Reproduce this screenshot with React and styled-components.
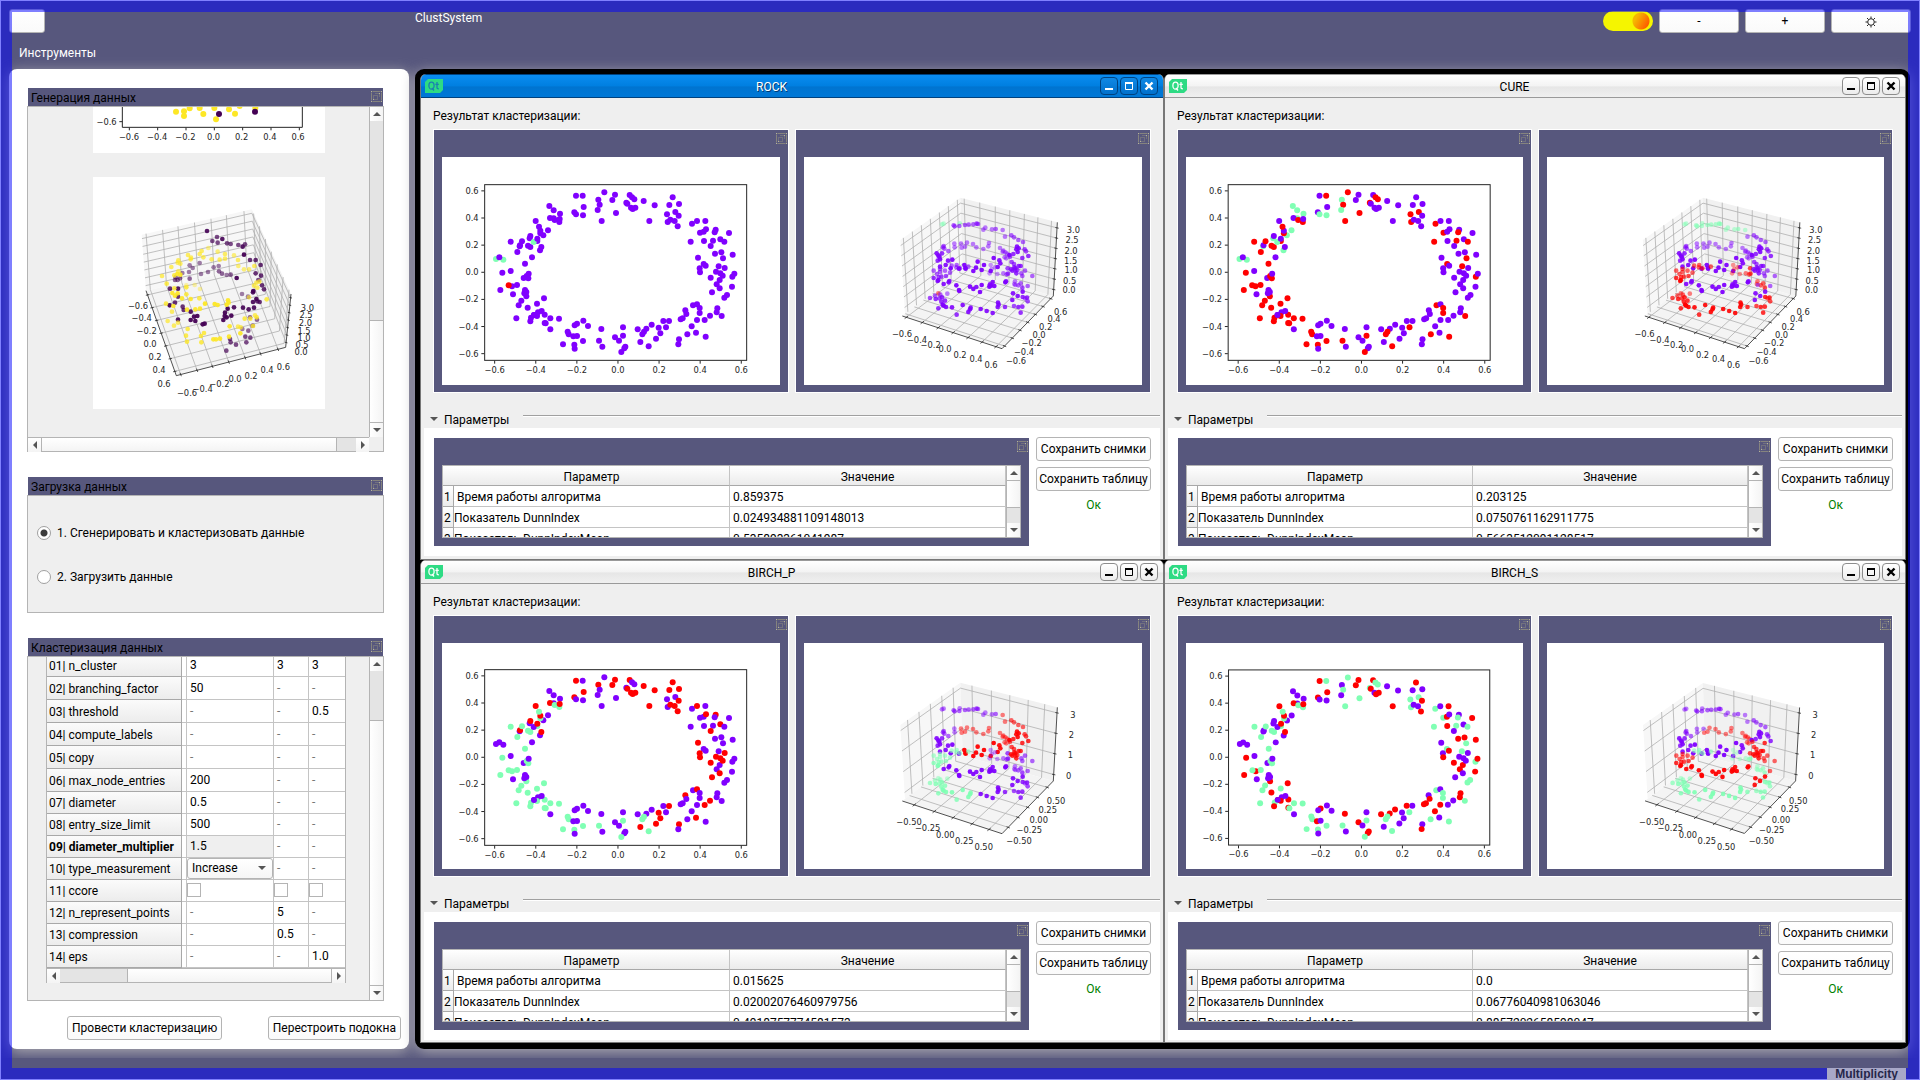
import React from "react";
import styled, { createGlobalStyle, css } from "styled-components";

const GlobalStyle = createGlobalStyle`
  *, *::before, *::after { box-sizing: border-box; }
  html, body { margin: 0; height: 100%; }
  body {
    background: #57577d;
    font-family: Roboto, "Noto Sans", sans-serif;
    font-size: 12px;
    line-height: 16px;
    color: #000;
    overflow: hidden;
  }
  button, input, select { font: inherit; color: inherit; margin: 0; }
`;

/* ---------- data ---------- */

const COLORS = { P: "#8000ff", G: "#80ffb4", R: "#ff0000" };
const ALGORITHMS = ["ROCK", "CURE", "BIRCH_P", "BIRCH_S"];

/* x,y,clusters: one letter for each algorithm, in the order of ALGORITHMS */
const parse = (text) =>
  text
    .trim()
    .split(/\s+/)
    .map((item) => {
      const parts = item.split(",");
      return {
        x: Number(parts[0]),
        y: Number(parts[1]),
        clusters: parts[parts.length - 1],
        alpha: parts.length > 3 ? Number(parts[2]) / 10 : 1,
      };
    });

const FLAT_POINTS = parse(`
498,407,PPRR 518,407,PRPG 583,397,PRPG 615,404,PPRR 607,420,PPRR 565,419,PGRP 569,434,PRPG 563,450,PGPP
521,441,PPRR 418,438,PGPP 431,451,PGPP 450,461,PGPP 493,457,PPRR 498,463,PGPP 519,466,PGPP 575,483,PRPG
618,459,PRPG 659,405,PPRR 666,412,PRPG 673,418,PRPG 649,428,PRPG 652,431,PPRR 663,443,PPRP 668,447,PPRR
676,443,PPRR 701,423,PPRP 734,436,PPRP 718,483,PPRR 788,412,PPRR 778,435,PPRP 807,432,PPRP 771,463,PRPG
796,456,PRPG 806,467,PPRR 773,486,PRPG 781,479,PPRP 794,483,PPRP 803,499,PPRR 846,491,PRPG 861,483,PPRP
886,483,PPPR 870,518,PRPG 881,515,PPPR 888,508,PPRP 917,509,PPRP 914,517,PRPG 957,519,PPPR 842,545,PRPG
882,543,PPPR 909,542,PRPG 902,558,PPRP 931,538,PPRP 943,545,PRPG 915,581,PPPR 934,577,PPPR 968,584,PPPR
864,593,PPRP 939,595,PRPG 881,612,PRPG 887,617,PPPR 869,625,PPRP 870,637,PPRR 926,619,PRPG 944,624,PPRP
918,635,PPRP 931,640,PPRP 902,653,PPRR 929,660,PPPR 967,650,PRPG 973,641,PPPR 938,647,PPRP 920,673,PPPR
929,685,PPRP 966,680,PPPR 906,697,PPRP 951,705,PPPG 943,713,PPPG 849,736,PRPG 861,733,PPRP 869,744,PRPG
869,759,PRPG 826,751,PPRP 829,762,PPPR 818,775,PPPR 812,778,PPPR 922,745,PPPR 920,757,PPPR 935,768,PRPG
900,767,PPRP 884,780,PPRP 861,780,PPPR 845,799,PPPR 858,818,PPRP 887,830,PRPG 832,823,PRPG 807,838,PPRP
805,853,PPPR 777,783,PPRP 760,783,PPPR 768,802,PRPG 746,803,PPRP 725,794,PPPR 751,820,PPRP 738,836,PPRP
716,859,PRGG 709,806,PPPR 683,808,PPPR 702,815,PRGG 697,823,PRGG 691,846,PPRP 639,802,PPPP 639,827,PRGG
615,832,PPPR 627,842,PPPP 646,860,PPPR 643,865,PPPR 634,876,PRGG 574,807,PPPR 567,842,PRGG 577,860,PPPP
534,798,PPPP 520,782,PPPP 501,791,PPPR 494,796,PPPP 473,815,PRGG 476,823,PRGG 490,829,PPPR 501,828,PPPP
519,843,PRGG 459,853,PRGG 493,854,PRGG 494,866,PPPP 421,808,PPPP 447,776,PRGG 421,775,PRGG 404,764,PRGR
404,789,PRGR 407,790,PRGG 395,753,PPPP 384,757,PPPP 372,765,PPPR 381,768,PRGR 363,773,PRGG 361,784,PRGR
372,765,PPPP 381,731,PRGG 402,715,PRGR 353,743,PRGR 319,775,PRGG 326,736,PRGG 334,722,PRGG 349,709,PRGR
343,700,PPPP 349,696,PPPP 345,690,PPPP 309,703,PPPP 271,690,PRGR 306,679,PRGR 296,676,RRGG 321,675,PRGG
341,654,PPPP 350,648,PRGG 355,655,PRGG 356,641,PPPP 277,638,PRGR 302,633,PPPP 345,611,PRGG 366,592,PPPP
258,597,GGPP 280,599,GGPP 268,592,PPPP 390,571,PGPP 394,561,PPRR 322,576,PRGG 329,559,PGPP 330,556,PPRP
302,545,PRGG 336,544,PRGG 354,557,PRGG 361,561,PRGG 359,535,PGPP 361,528,PPRP 382,543,PRGG 371,546,GGPP
382,536,PPRR 400,526,PGPP 391,520,PRGG 391,512,PPRR 387,500,PRGG 414,511,PGPP 377,483,PPRR 431,475,PGPP
420,474,PPRR 434,480,PRGG 448,486,PRGG 449,477,PPRR`);

/* x,y,depth shading,clusters */
const DEPTH_POINTS = parse(`
486,493,5,GGPP 491,491,5,GGPP 539,490,5,GGPP 521,496,6,PGPP 524,499,6,PGPP 538,498,6,PGPP 555,495,6,PGPP
566,494,6,PGPP 580,493,6,PGPP 590,491,7,PGPP 594,492,6,PGPP 610,509,5,PGPP 616,503,5,PGPP 636,508,5,PGPP
647,507,6,PGPP 668,510,5,PGRP 675,530,5,PPRP 694,526,6,PPRP 702,532,6,PPRP 715,540,6,PPRP 729,546,6,PPRP
523,551,5,PPPP 524,562,5,PPPP 505,573,6,PPPP 491,558,6,PPPP 489,562,6,PPPP 493,566,6,PPPP 543,551,5,PPRP
545,563,5,PPRR 555,560,5,PPRR 561,548,5,PPRR 579,552,5,PPRR 589,562,5,PPRR 610,567,5,PPRR 625,559,5,PPRR
627,549,5,PPRR 660,564,5,PPRR 670,572,5,PPRR 676,577,5,PPRR 681,581,5,PPRR 668,575,5,PPRR 679,595,5,PPRR
674,592,5,PPRR 711,560,9,PPRP 709,568,9,PPRP 716,565,9,PPRP 713,576,9,PPRP 734,568,7,PPRP 738,574,7,PPRP
745,588,8,PPRP 727,594,8,PPRR 688,585,10,PPRP 700,582,8,PPRP 470,580,9,PPPP 486,580,8,PPPP 478,590,9,PPPP
473,602,8,PPPP 480,598,9,PPPP 475,587,9,PPPP 504,602,9,PPPP 517,599,10,PPPP 480,620,9,PPPP 497,615,9,PPPP
641,594,10,PPRP 658,601,9,PPRP 661,610,9,PPRP 653,621,10,PPRP 593,605,10,PPRP 612,615,10,PPRP 588,623,10,PPRP
580,633,10,PPRP 605,630,10,PPRP 553,615,10,PPRP 556,624,10,PPRP 557,626,10,PPRP 632,633,10,PPRP 537,626,10,PPPP
512,625,10,PPPP 530,615,6,PRGG 529,622,6,PRGG 515,617,6,PRGG 540,625,6,PRGG 565,620,6,PRGG 632,615,4,PRPG
629,640,4,PRPG 645,622,4,PRPG 652,642,4,PRPG 635,627,4,PRPG 670,640,5,PRPG 683,625,7,PRPR 684,641,7,PRPG
680,643,6,PRPG 695,606,7,PPRR 702,612,7,PPRR 693,628,8,PPRR 697,632,8,PPRR 703,622,8,PPRR 706,625,8,PPRR
709,640,8,PPRR 706,632,7,PPRR 716,618,8,PPRR 722,618,8,PPRR 712,630,7,PPRR 735,632,6,PPPR 757,648,6,PPPR
727,648,6,PPPR 724,640,6,PPPR 690,590,7,PPRR 461,632,6,PRGR 480,636,6,PRGR 471,642,6,PRGR 476,651,7,PRGR
461,654,8,PRGR 480,627,6,PRGR 495,632,6,PRGR 510,638,6,PRGR 498,648,7,PRGR 484,650,7,PRGR 473,663,9,PRGR
475,660,9,PRGR 508,663,9,PPPR 506,667,9,PPPR 491,672,9,PPPR 529,676,10,PPPR 537,690,10,PPPR 538,693,10,PPPR
570,680,10,PPPR 580,687,10,PPPR 589,681,9,PPPR 605,675,10,PPPR 600,696,10,PPPR 628,680,10,PPPR 638,666,9,PPPR
633,677,10,PPPR 643,678,10,PPPR 630,673,9,PPPR 676,667,10,PPPR 678,664,9,PPPR 705,664,5,PRPG 703,672,5,PRPG
715,676,6,PRPG 722,670,6,PRPG 727,683,7,PRPG 743,678,6,PPPR 706,675,5,PPPG 699,700,9,PPPR 713,708,9,PPPR
728,695,9,PPPR 728,711,8,PRPG 697,720,9,PPPR 741,713,8,PRPG 743,724,7,PRPG 735,715,6,PRPG 702,738,7,PRPG
715,741,8,PRPG 727,740,8,PRPG 722,758,8,PRPG 475,700,5,RRGG 481,704,6,PRGG 502,701,5,PRGG 465,707,6,PRGG
450,714,7,PRGG 467,717,8,PRGG 486,712,8,PRGG 495,722,8,PRGG 484,725,8,PRGG 478,715,7,PRGG 488,734,10,PRGG
491,737,10,PRGG 498,741,9,PRGG 475,745,8,PRGG 516,742,9,PRGG 548,735,9,PRGG 572,743,9,PRGG 570,748,9,PRGG
565,756,9,PRGG 530,764,8,PRGG 602,747,9,PRPG 620,753,9,PRPG 638,759,9,PRPG 654,728,9,PRPG 656,734,9,PRPG
653,741,9,PRPG 675,741,8,PRPG`);

const SOURCE_POINTS = parse(`
351,393,9,D 367,423,7,D 381,411,7,D 383,428,7,D 397,417,9,D 411,430,7,D 422,432,7,D 445,435,7,D 458,440,9,D
465,433,7,D 462,464,10,D 480,480,8,D 497,480,8,D 512,495,8,D 497,520,8,D 513,527,8,D 505,540,7,D 516,556,8,D
522,568,8,D 490,573,10,D 489,577,9,D 499,597,10,D 489,606,9,D 502,604,8,D 509,606,8,D 476,628,9,D 492,623,9,D
459,623,9,D 432,622,9,D 456,582,5,D 474,590,5,D 440,534,10,D 422,524,6,D 410,525,5,D 396,521,6,D 386,498,5,D
387,514,6,D 371,502,5,D 354,516,5,D 333,522,5,D 329,489,5,D 308,504,5,D 299,496,5,D 297,516,5,D 299,536,6,D
277,519,5,D 270,535,6,D 255,540,6,D 263,540,6,D 257,532,6,D 240,566,8,D 264,566,9,D 264,590,8,D 255,608,8,D
239,616,10,D 278,620,8,D 281,630,8,D 302,635,9,D 264,659,9,D 302,660,10,D 312,650,10,D 322,648,10,D 316,663,10,D
338,673,10,D 344,671,10,D 400,660,10,D 404,648,10,D 405,638,10,D 413,626,10,D 424,647,10,D 410,652,10,D
480,652,6,D 501,659,6,D 457,687,5,D 475,692,6,D 488,677,6,D 466,710,7,D 481,713,7,D 469,727,7,D 422,727,7,D
438,734,7,D 420,717,7,D 409,752,7,D
216,528,7,Y 244,501,7,Y 265,481,7,Y 271,491,7,Y 263,488,7,Y 294,465,7,Y 303,473,7,Y 302,478,7,Y 329,462,7,Y
335,453,7,Y 355,444,5,Y 340,472,7,Y 365,478,7,Y 383,455,6,Y 389,479,7,Y 405,462,7,Y 405,476,7,Y 432,466,6,Y
444,480,7,Y 445,498,6,Y 462,508,6,Y 477,508,6,Y 493,498,7,Y 499,548,7,Y 508,545,7,Y 492,557,7,Y 502,563,7,Y
477,592,6,Y 530,598,8,Y 253,526,8,Y 265,514,7,Y 262,522,9,Y 271,524,9,Y 230,551,8,Y 289,562,8,Y 314,555,4,Y
330,567,4,Y 289,556,4,Y 253,565,8,Y 247,579,9,Y 263,580,9,Y 255,587,9,Y 276,595,9,Y 289,583,8,Y 302,597,9,Y
328,595,8,Y 228,611,8,Y 250,618,9,Y 246,635,7,Y 291,629,9,Y 316,628,9,Y 330,626,9,Y 345,611,10,Y 374,612,10,Y
383,615,9,Y 410,614,10,Y 414,601,9,Y 416,608,9,Y 233,663,7,Y 252,677,7,Y 264,668,7,Y 293,687,8,Y 291,725,8,Y
288,707,8,Y 333,708,8,Y 342,699,8,Y 334,727,8,Y 370,718,9,Y 378,718,9,Y 390,716,9,Y 417,710,9,Y 419,679,9,Y
451,700,9,Y 452,682,7,Y 444,680,7,Y 464,656,8,Y 481,656,8,Y 495,646,7,Y 500,652,8,Y 489,678,8,Y`);

const SOURCE_COLORS = { D: "#440154", Y: "#fde725" };

const TICKS = ["−0.6", "−0.4", "−0.2", "0.0", "0.2", "0.4", "0.6"];

const label = (text, x, y) => ({ text, x, y });

const FINE_SCENE = {
  left: [[361, 540], [541, 413], [548, 632], [375, 762]],
  right: [[541, 413], [832, 487], [820, 708], [548, 632]],
  floor: [[367, 768], [548, 632], [820, 708], [666, 866]],
  a: [0.05, 0.2, 0.35, 0.5, 0.65, 0.8, 0.95],
  b: [0.04, 0.2, 0.36, 0.51, 0.66, 0.8, 0.94],
  z: [0.075, 0.213, 0.352, 0.492, 0.63, 0.77, 0.912],
  labels: [
    label("−0.6", 366, 823), label("−0.4", 411, 839), label("−0.2", 452, 854), label("0.0", 495, 868),
    label("0.2", 540, 884), label("0.4", 588, 898), label("0.6", 633, 914),
    label("−0.6", 708, 902), label("−0.4", 732, 875), label("−0.2", 755, 850), label("0.0", 777, 826),
    label("0.2", 797, 802), label("0.4", 822, 778), label("0.6", 842, 755),
    label("3.0", 880, 509), label("2.5", 876, 541), label("2.0", 873, 572), label("1.5", 872, 602),
    label("1.0", 873, 631), label("0.5", 869, 662), label("0.0", 867, 691),
  ],
};

const COARSE_SCENE = {
  ...FINE_SCENE,
  a: [0.12, 0.31, 0.5, 0.69, 0.88],
  b: [0.12, 0.32, 0.51, 0.7, 0.87],
  z: [0.075, 0.352, 0.63, 0.912],
  labels: [
    label("−0.50", 387, 831), label("−0.25", 443, 849), label("0.00", 496, 870), label("0.25", 553, 888),
    label("0.50", 611, 907), label("−0.50", 717, 889), label("−0.25", 748, 855), label("0.00", 776, 825),
    label("0.25", 803, 794), label("0.50", 828, 767),
    label("3", 879, 511), label("2", 874, 570), label("1", 871, 629), label("0", 866, 693),
  ],
};

const SOURCE_SCENE = {
  left: [[155, 404], [485, 328], [493, 497], [168, 572]],
  right: [[485, 328], [603, 582], [587, 742], [493, 497]],
  floor: [[259, 827], [168, 572], [493, 497], [587, 742]],
  a: [0.04, 0.19, 0.33, 0.48, 0.63, 0.77, 0.93],
  b: [0.05, 0.2, 0.35, 0.5, 0.65, 0.8, 0.95],
  z: [0.07, 0.21, 0.35, 0.49, 0.63, 0.77, 0.91],
  labels: [
    label("−0.6", 144, 617), label("−0.4", 155, 655), label("−0.2", 170, 692), label("0.0", 180, 731),
    label("0.2", 195, 770), label("0.4", 207, 811), label("0.6", 222, 853),
    label("−0.6", 291, 878), label("−0.4", 338, 866), label("−0.2", 388, 852), label("0.0", 435, 838),
    label("0.2", 483, 827), label("0.4", 531, 811), label("0.6", 580, 800),
    label("3.0", 652, 625), label("2.5", 648, 646), label("2.0", 646, 670), label("1.5", 642, 693),
    label("1.0", 642, 714), label("0.5", 636, 736), label("0.0", 633, 757),
  ],
};

const WINDOWS = [
  { name: "ROCK", active: true, upper: true, scene: FINE_SCENE, values: ["0.859375", "0.024934881109148013", "0.535893361041987"] },
  { name: "CURE", upper: true, scene: FINE_SCENE, values: ["0.203125", "0.0750761162911775", "0.5663512091128517"] },
  { name: "BIRCH_P", scene: COARSE_SCENE, values: ["0.015625", "0.02002076460979756", "0.4918757774581573"] },
  { name: "BIRCH_S", scene: COARSE_SCENE, values: ["0.0", "0.06776040981063046", "0.8857202658598047"] },
];

const METRICS = ["\u00a0Время работы алгоритма", "Показатель DunnIndex", "Показатель DunnIndexMean"];

const PARAMETERS = [
  ["01| n_cluster", "3", "3", "3"],
  ["02| branching_factor", "50", "-", "-"],
  ["03| threshold", "-", "-", "0.5"],
  ["04| compute_labels", "-", "-", "-"],
  ["05| copy", "-", "-", "-"],
  ["06| max_node_entries", "200", "-", "-"],
  ["07| diameter", "0.5", "-", "-"],
  ["08| entry_size_limit", "500", "-", "-"],
  ["09| diameter_multiplier", "1.5", "-", "-"],
  ["10| type_measurement", "select", "-", "-"],
  ["11| ccore", "check", "check", "check"],
  ["12| n_represent_points", "-", "5", "-"],
  ["13| compression", "-", "0.5", "-"],
  ["14| eps", "-", "-", "1.0"],
];

/* ---------- charts ---------- */

const Drawing = styled.svg`
  display: block;
  width: 100%;
  height: 100%;
  background: #fff;
  text {
    font-family: "DejaVu Sans", sans-serif;
    font-size: 25px;
    fill: #262626;
  }
`;

function FlatChart({ name }) {
  const index = ALGORITHMS.indexOf(name);
  return (
    <Drawing viewBox="96 291 1014 684" preserveAspectRatio="xMidYMid slice" role="img" aria-label={`${name} 2D`}>
      {FLAT_POINTS.map((p, i) => (
        <circle key={i} cx={p.x} cy={p.y} r="9" fill={COLORS[p.clusters[index]]} />
      ))}
      <rect x="224" y="374" width="786" height="527" fill="none" stroke="#262626" strokeWidth="3" />
      {TICKS.map((t, i) => (
        <g key={t}>
          <path d={`M${254 + i * 123.3} 902v9M${223} ${881 - i * 81.4}h-9`} stroke="#262626" strokeWidth="3" />
          <text x={254 + i * 123.3} y="938" textAnchor="middle">{t}</text>
          <text x="206" y={890 - i * 81.4} textAnchor="end">{t}</text>
        </g>
      ))}
    </Drawing>
  );
}

const mix = (p, q, t) => [p[0] + (q[0] - p[0]) * t, p[1] + (q[1] - p[1]) * t];
const seg = (p, q) => `M${p[0].toFixed(1)} ${p[1].toFixed(1)}L${q[0].toFixed(1)} ${q[1].toFixed(1)}`;
const quad = (q) => q.map((p) => p.join(",")).join(" ");
const hatch = ([a, b, c, d], along, across) =>
  along.map((t) => seg(mix(a, b, t), mix(d, c, t))).join("") +
  across.map((t) => seg(mix(a, d, t), mix(b, c, t))).join("");

function SceneBox({ scene, children, edges, ticks }) {
  return (
    <g>
      <polygon points={quad(scene.left)} fill="#f7f7f7" />
      <polygon points={quad(scene.right)} fill="#f1f1f1" />
      <polygon points={quad(scene.floor)} fill="#f4f4f4" />
      <path
        d={
          hatch(scene.left, scene.a, scene.z) +
          hatch(scene.right, scene.b, scene.z) +
          ticks.floor
        }
        stroke="#b0b0b0"
        strokeWidth="2.4"
        fill="none"
      />
      <path d={edges + ticks.marks} stroke="#262626" strokeWidth="2.4" fill="none" />
      {children}
      {scene.labels.map((l, i) => (
        <text key={i} x={l.x} y={l.y + 9} textAnchor="middle">{l.text}</text>
      ))}
    </g>
  );
}

const nudge = (p, dx, dy) => [seg([p[0] - dx, p[1] - dy], [p[0] + dx, p[1] + dy])];

function DepthChart({ name, scene }) {
  const index = ALGORITHMS.indexOf(name);
  const [west, back, east, front] = scene.floor;
  const top = scene.right[1];
  const marks =
    scene.b.map((t) => nudge(mix(west, front, t), 5, -4)).join("") +
    scene.a.map((t) => nudge(mix(front, east, t), 5, 2)).join("") +
    scene.z.map((t) => nudge(mix(top, east, t), 5, 1)).join("");
  return (
    <Drawing viewBox="72 291 1014 684" preserveAspectRatio="xMidYMid slice" role="img" aria-label={`${name} 3D`}>
      <SceneBox
        scene={scene}
        edges={seg(west, front) + seg(front, east) + seg(east, top)}
        ticks={{ floor: hatch([west, back, east, front], scene.a, scene.b), marks }}
      >
        {DEPTH_POINTS.map((p, i) => (
          <circle key={i} cx={p.x} cy={p.y} r="7" fill={COLORS[p.clusters[index]]} fillOpacity={Math.min(p.alpha, 0.95)} />
        ))}
      </SceneBox>
    </Drawing>
  );
}

function SourceDepthChart() {
  const scene = SOURCE_SCENE;
  const [front, west, back, east] = scene.floor;
  const top = scene.right[1];
  const marks =
    scene.b.map((t) => nudge(mix(west, front, t), 5, -1)).join("") +
    scene.a.map((t) => nudge(mix(front, east, t), 2, 5)).join("") +
    scene.z.map((t) => nudge(mix(top, east, t), 4, 1)).join("");
  return (
    <Drawing viewBox="9 231 696 696" role="img" aria-label="3D">
      <SceneBox
        scene={scene}
        edges={seg(west, front) + seg(front, east) + seg(east, top)}
        ticks={{ floor: hatch([west, back, east, front], scene.a, scene.b), marks }}
      >
        {SOURCE_POINTS.map((p, i) => (
          <circle key={i} cx={p.x} cy={p.y} r="7" fill={SOURCE_COLORS[p.clusters]} fillOpacity={Math.min(p.alpha, 0.95)} />
        ))}
      </SceneBox>
    </Drawing>
  );
}

const TAIL_POINTS = [
  [258, 35, "Y"], [282, 34, "Y"], [282, 48, "Y"], [299, 25, "Y"], [329, 24, "Y"], [340, 42, "Y"], [373, 24, "Y"],
  [378, 58, "Y"], [387, 42, "D"], [417, 28, "Y"], [435, 41, "Y"], [449, 18, "Y"], [496, 24, "Y"], [495, 35, "D"],
];

function SourceFlatChart() {
  return (
    <Drawing viewBox="9 21 696 138" role="img" aria-label="2D">
      {TAIL_POINTS.map(([x, y, c], i) => (
        <circle key={i} cx={x} cy={y} r="9" fill={SOURCE_COLORS[c]} />
      ))}
      <path d="M97 0V82H637V0M97 65h-9" fill="none" stroke="#262626" strokeWidth="3" />
      <text x="80" y="74" textAnchor="end">−0.6</text>
      {TICKS.map((t, i) => (
        <g key={t}>
          <path d={`M${118 + i * 85} 83v8`} stroke="#262626" strokeWidth="3" />
          <text x={117 + i * 84.5} y="119" textAnchor="middle">{t}</text>
        </g>
      ))}
    </Drawing>
  );
}

/* ---------- small parts ---------- */

const Icon = styled.svg`
  display: block;
  flex: none;
`;

const PlainIconButton = styled.button`
  display: block;
  padding: 0;
  border: 0;
  background: none;
`;

function FloatButton() {
  return (
    <PlainIconButton type="button" aria-label="Открепить панель">
      <Icon width="11" height="11" viewBox="0 0 11 11" fill="none">
        <path d="M1.5.5h8M.5 1.5v8M1.5 10.5h8M10.500 1.5v8" stroke="#85837e" />
        <path d="M4.500 2.500h4v4M2.500 4.500h4v4h-4z" stroke="#8e8c80" strokeDasharray="1 1" />
        <path d="M0 0h1v1H0zM10 0h1v1h-1zM0 10h1v1H0zM10 10h1v1h-1zM2 8h1v1H2zM8 2h1v1H8z" fill="#b4b29c" />
      </Icon>
    </PlainIconButton>
  );
}

const PushButton = styled.button`
  height: 24px;
  min-width: ${(p) => p.$min || 0}px;
  padding: ${(p) => (p.$tight ? "1px 0 0" : "1px 4px 0")};
  border: 1px solid #b4b4b4;
  border-radius: 3px;
  background: linear-gradient(#ffffff, #fafafa);
  line-height: 21px;
  white-space: nowrap;
  text-align: center;
`;

const ArrowButton = styled.button`
  flex: none;
  width: 13px;
  height: 14px;
  padding: 0;
  border: 0 solid #b4b4b4;
  background: linear-gradient(${(p) => (p.$horizontal ? "180deg" : "90deg")}, #ffffff, #f4f4f4);
  display: flex;
  align-items: center;
  justify-content: center;
`;

const Arrow = styled.span`
  border: 4px solid transparent;
  ${(p) => p.$dir === "up" && css`border-bottom-color: #555; border-top-width: 0;`}
  ${(p) => p.$dir === "down" && css`border-top-color: #555; border-bottom-width: 0;`}
  ${(p) => p.$dir === "left" && css`border-right-color: #555; border-left-width: 0;`}
  ${(p) => p.$dir === "right" && css`border-left-color: #555; border-right-width: 0;`}
`;

const BarTrack = styled.div`
  display: flex;
  flex: none;
  flex-direction: ${(p) => (p.$horizontal ? "row" : "column")};
  ${(p) => (p.$horizontal ? "height: 14px; border-top: 1px solid #b4b4b4;" : "width: 14px; border-left: 1px solid #b4b4b4;")}
  background: #e4e4e4;
`;

const Groove = styled.div`
  flex: ${(p) => p.$share} 0 0;
  background: #e4e4e4;
`;

const Slider = styled.div`
  flex: ${(p) => p.$share} 0 0;
  background: linear-gradient(${(p) => (p.$horizontal ? "180deg" : "90deg")}, #ffffff, #f4f4f4);
  border: 0 solid #b4b4b4;
  ${(p) => (p.$horizontal ? "border-left-width: 1px; border-right-width: 1px;" : "border-top-width: 1px; border-bottom-width: 1px;")}
`;

function Bar({ horizontal, before, size, after }) {
  return (
    <BarTrack $horizontal={horizontal}>
      <ArrowButton type="button" $horizontal={horizontal} aria-label={horizontal ? "Влево" : "Вверх"}>
        <Arrow $dir={horizontal ? "left" : "up"} />
      </ArrowButton>
      <Groove $share={before} />
      <Slider $horizontal={horizontal} $share={size} />
      <Groove $share={after} />
      <ArrowButton type="button" $horizontal={horizontal} aria-label={horizontal ? "Вправо" : "Вниз"}>
        <Arrow $dir={horizontal ? "right" : "down"} />
      </ArrowButton>
    </BarTrack>
  );
}

/* ---------- page ---------- */

const Page = styled.div`
  display: flex;
  flex-direction: column;
  height: 100vh;
  min-height: 900px;
  padding-bottom: 22px;
`;

const Header = styled.header`
  display: grid;
  grid-template-columns: 400px 1fr;
  column-gap: 6px;
  height: 69px;
  padding: 9px 9px 0;
  color: #fff;
`;

const CornerButton = styled(PushButton)`
  width: 36px;
`;

const TopRow = styled.div`
  display: flex;
  justify-content: space-between;
  align-items: flex-start;
`;

const HeaderLeft = styled.div`
  display: flex;
  flex-direction: column;
  align-items: flex-start;
  gap: 12px;
`;

const AppTitle = styled.h1`
  margin: 0;
  font-size: 12px;
  line-height: 18px;
  font-weight: 400;
`;

const MenuButton = styled.button`
  padding: 0 10px;
  border: 0;
  background: none;
  line-height: 16px;
`;

const HeaderTools = styled.div`
  display: flex;
  align-items: center;
  gap: 6px;
  color: #000;
`;

const Toggle = styled.label`
  display: flex;
  input {
    appearance: none;
    width: 50px;
    height: 20px;
    border-radius: 10px;
    background:
      radial-gradient(circle at 38px 10px, transparent 0, transparent 8px, #f5f500 9px),
      linear-gradient(120deg, #f5b800 60%, #ff5500 88%);
  }
`;

const Main = styled.main`
  flex: 1;
  min-height: 0;
  display: grid;
  grid-template-columns: 400px 1fr;
  gap: 6px;
  padding: 0 10px 9px 9px;
  clip-path: inset(-20px 0 0 0);
`;

const glow = css`
  box-shadow: 0 3px 14px #adabb0;
`;

const SidePanel = styled.aside`
  display: flex;
  flex-direction: column;
  min-height: 0;
  padding: 19px 8px 9px 18px;
  border-radius: 8px;
  background: #fff;
  ${glow}
`;

const Group = styled.section`
  display: flex;
  flex-direction: column;
  margin: 0 17px 25px 0;
  ${(p) => p.$grow && css`flex: 1 1 0; min-height: 0;`}
  ${(p) => p.$last && css`margin-bottom: 15px;`}
`;

const GroupHead = styled.div`
  display: flex;
  justify-content: space-between;
  align-items: flex-start;
  height: 18px;
  margin: 0 1px;
  padding: 3px 1px 0 3px;
  background: #57577d;
  h2 {
    margin: 0;
    font-size: 12px;
    line-height: 15px;
    font-weight: 400;
  }
`;

const GroupBody = styled.div`
  flex: 1;
  min-height: 0;
  display: flex;
  border: 1px solid #b4b4b4;
  background: #efefef;
  ${(p) => p.$column && css`flex-direction: column;`}
`;

const ScrollRow = styled.div`
  flex: 1;
  min-height: 0;
  display: flex;
`;

const Viewport = styled.div`
  flex: 1;
  min-width: 0;
  overflow: hidden;
`;

const ChartStack = styled(Viewport)`
  display: flex;
  flex-direction: column;
  align-items: center;
  gap: 24px;
  padding-left: 20px;
`;

const SourceCanvas = styled.div`
  flex: none;
  width: 232px;
  height: ${(p) => p.$height}px;
`;

const BottomBar = styled.div`
  display: grid;
  grid-template-columns: 1fr 14px;
`;

const Radios = styled.div`
  display: flex;
  flex-direction: column;
  justify-content: space-between;
  height: 116px;
  padding: 29px 9px 27px;
`;

const RadioLabel = styled.label`
  display: flex;
  align-items: center;
  gap: 6px;
  input {
    appearance: none;
    width: 14px;
    height: 14px;
    border: 1px solid #a0a0a0;
    border-radius: 50%;
    background: #fff;
  }
  input:checked {
    background: radial-gradient(circle, #3c3c3c 3px, #ffffff 4px);
  }
`;

const ParamFrame = styled.div`
  width: 300px;
  margin-left: 18px;
  border: 1px solid #b4b4b4;
  border-top: 0;
  background: #fff;
`;

const ParamTable = styled.table`
  width: 298px;
  margin-top: -3px;
  border-collapse: separate;
  border-spacing: 0;
  table-layout: fixed;
  th {
    padding: 3px 0 0 2px;
    line-height: 15px;
    text-align: left;
    font-weight: 400;
    white-space: nowrap;
    background: linear-gradient(#fbfbfb, #ececec);
    border-right: 1px solid #a8a8a8;
    border-bottom: 1px solid #a8a8a8;
  }
  td {
    padding: 0 0 0 3px;
    border-right: 1px solid #c4c4c4;
    border-bottom: 1px solid #c4c4c4;
  }
  td:last-child { border-right: 0; }
`;

const ParamRow = styled.tr`
  height: ${(p) => (p.$tall ? 23 : 22)}px;
  && th { font-weight: ${(p) => (p.$current ? 700 : 400)}; }
  && td:nth-child(3) { background: ${(p) => (p.$current ? "#efefef" : "none")}; }
`;

const Value = styled.td`
  color: ${(p) => (p.$empty ? "#777" : "#000")};
  && { padding-left: ${(p) => (p.$control ? 0 : 3)}px; }
`;

const SelectBox = styled.div`
  display: grid;
  align-items: center;
  select {
    grid-area: 1 / 1;
    appearance: none;
    width: 100%;
    height: 21px;
    padding: 0 4px;
    border: 1px solid #b4b4b4;
    border-radius: 3px;
    background: linear-gradient(#ffffff, #f6f6f6);
  }
  span {
    grid-area: 1 / 1;
    justify-self: end;
    margin-right: 7px;
    pointer-events: none;
  }
`;

const CheckBox = styled.input`
  appearance: none;
  display: block;
  width: 14px;
  height: 14px;
  border: 1px solid #b4b4b4;
  background: #fff;
`;

const Actions = styled.div`
  display: flex;
  justify-content: space-between;
  padding-left: 40px;
`;

/* ---------- sub-windows ---------- */

const Desktop = styled.div`
  display: grid;
  grid-template-columns: 744fr 742fr;
  grid-template-rows: 486fr 483fr;
  min-width: 0;
  min-height: 0;
  border: solid #000;
  border-width: 5px 4px 6px 5px;
  border-radius: 9px;
  background: #000;
  ${glow}
`;

const Frame = styled.section`
  display: flex;
  flex-direction: column;
  min-width: 0;
  min-height: 0;
  border: solid #777;
  border-width: 0 1px 1px;
  border-radius: 6px 6px 0 0;
  background: #efefef;
  overflow: hidden;
`;

const TitleBar = styled.header`
  display: grid;
  grid-template-columns: 20px 1fr 60px;
  align-items: center;
  height: 24px;
  padding: 0 5px 0 4px;
  border-top: 1px solid ${(p) => (p.$active ? "#00427f" : "#9a9a9a")};
  border-bottom: 1px solid ${(p) => (p.$active ? "#00427f" : "#9a9a9a")};
  background: ${(p) =>
    p.$active
      ? "linear-gradient(#0a8cf0, #007fe0 50%, #0074d0 54%, #0078d7)"
      : "linear-gradient(#ffffff, #f3f3f3 50%, #e6e6e6 54%, #f0f0f0)"};
  color: ${(p) => (p.$active ? "#fff" : "#000")};
  text-shadow: ${(p) => (p.$active ? "1px 1px 0 #003a70" : "none")};
  h2 {
    margin: 0;
    padding-top: 2px;
    font-size: 12px;
    line-height: 16px;
    font-weight: 400;
    text-align: center;
  }
`;

const WindowButtons = styled.div`
  display: flex;
  gap: 2px;
  justify-content: flex-end;
`;

const WindowButton = styled.button`
  display: grid;
  place-items: center;
  width: 18px;
  height: 18px;
  padding: 0;
  border: 1px solid ${(p) => (p.$active ? "#00427f" : "#8c8c8c")};
  border-radius: 4px;
  background: ${(p) => (p.$active ? "linear-gradient(#1088e4, #0070cc)" : "linear-gradient(#ffffff, #ececec)")};
`;

const WindowLabel = styled.p`
  margin: 0;
  padding: 10px 12px 5px;
`;

const ChartRow = styled.div`
  flex: 1;
  min-height: 0;
  display: grid;
  grid-template-columns: 1fr 1fr;
  gap: 6px;
  padding: 0 12px;
`;

const Dock = styled.div`
  display: grid;
  grid-template-rows: 27px minmax(0, 1fr);
  min-width: 0;
  min-height: 0;
  padding: 0 8px 8px;
  background: #57577d;
  ${(p) => p.$outlined && css`border: 1px solid #fff; padding: 0 8px 7px;`}
`;

const DockHead = styled.div`
  display: flex;
  justify-content: flex-end;
  align-items: flex-start;
  margin-right: -7px;
  padding-top: 3px;
`;

const Canvas = styled.div`
  min-width: 0;
  min-height: 0;
  background: #fff;
`;

const Disclosure = styled.button`
  display: flex;
  align-items: center;
  gap: 6px;
  height: 35px;
  padding: 16px 3px 0 9px;
  border: 0;
  background: none;
  text-align: left;
  line-height: 18px;
  span:last-child { padding-top: 2px; }
  &::after {
    content: "";
    flex: 1;
    height: 2px;
    margin: 0 0 5px 8px;
    background: linear-gradient(#a0a0a0 50%, #fff 50%);
  }
`;

const Details = styled.div`
  display: flex;
  gap: 7px;
  margin: 0 3px ${(p) => (p.$upper ? 3 : 2)}px;
  padding: 10px 9px 10px 10px;
  background: #fff;
`;

const TableDock = styled(Dock)`
  flex: 1;
  height: 108px;
`;

const TableBox = styled.div`
  display: flex;
  min-height: 0;
  border: 1px solid #b4b4b4;
  background: #fff;
`;

const ResultTable = styled.table`
  width: 100%;
  border-collapse: separate;
  border-spacing: 0;
  table-layout: fixed;
  th, td {
    padding: 1px 0 0;
    white-space: nowrap;
    overflow: hidden;
    font-weight: 400;
    border: 0 solid #c4c4c4;
    border-right-width: 1px;
    border-bottom-width: 1px;
  }
  tr { height: 21px; }
  thead th {
    height: 20px;
    padding-top: 2px;
    background: linear-gradient(#ffffff, #ebebeb);
    border-bottom-color: #a8a8a8;
  }
  thead th:first-child { border-right-width: 0; }
  thead tr { height: 20px; }
  tbody th {
    padding: 2px 0 0 1px;
    text-align: left;
    background: linear-gradient(#ffffff, #ebebeb);
    border-color: #a8a8a8;
  }
  tbody td + td { padding-left: 3px; }
`;

const SideButtons = styled.div`
  display: flex;
  flex-direction: column;
  gap: 6px;
  width: 115px;
  margin-top: -1px;
`;

const Status = styled.output`
  text-align: center;
  color: #008000;
`;

function QtBadge({ active }) {
  return (
    <Icon width="18" height="14" viewBox="0 0 18 14" aria-hidden="true">
      <path d="M3 0H18V11L15 14H0V3Z" fill="#2edb84" />
      <g fill="none" stroke={active ? "#1a7fb0" : "#ffffff"} strokeWidth="1.300">
        <ellipse cx="6.500" cy="6.700" rx="2.600" ry="3.500" />
        <path d="M7 9l2 2.500M12 3v5.500q0 1.500 1.800 1.200M10.400 5.300h3.400" />
      </g>
    </Icon>
  );
}

function WindowTitle({ name, active }) {
  const ink = active ? "#fff" : "#000";
  return (
    <TitleBar $active={active}>
      <QtBadge active={active} />
      <h2>{name}</h2>
      <WindowButtons>
        <WindowButton type="button" $active={active} aria-label="Свернуть">
          <Icon width="10" height="10"><path d="M1 8h8" stroke={ink} strokeWidth="2" /></Icon>
        </WindowButton>
        <WindowButton type="button" $active={active} aria-label="Развернуть">
          <Icon width="10" height="10">
            <path d="M1.500 2v6.500h7V2M1 2h8" fill="none" stroke={ink} />
            <path d="M1 2h8" stroke={ink} strokeWidth="2" />
          </Icon>
        </WindowButton>
        <WindowButton type="button" $active={active} aria-label="Закрыть">
          <Icon width="10" height="10"><path d="M1.500 1.500l7 7M8.500 1.500l-7 7" stroke={ink} strokeWidth="2.400" /></Icon>
        </WindowButton>
      </WindowButtons>
    </TitleBar>
  );
}

function SubWindow({ name, active, upper, scene, values }) {
  return (
    <Frame>
      <WindowTitle name={name} active={active} />
      <WindowLabel>Результат кластеризации:</WindowLabel>
      <ChartRow>
        <Dock $outlined>
          <DockHead><FloatButton /></DockHead>
          <Canvas><FlatChart name={name} /></Canvas>
        </Dock>
        <Dock $outlined>
          <DockHead><FloatButton /></DockHead>
          <Canvas><DepthChart name={name} scene={scene} /></Canvas>
        </Dock>
      </ChartRow>
      <Disclosure type="button" aria-expanded="true">
        <Arrow $dir="down" />
        <span>Параметры</span>
      </Disclosure>
      <Details $upper={upper}>
        <TableDock>
          <DockHead><FloatButton /></DockHead>
          <TableBox>
            <Viewport>
              <ResultTable>
                <colgroup>
                  <col style={{ width: 11 }} />
                  <col />
                  <col />
                </colgroup>
                <thead>
                  <tr>
                    <th />
                    <th scope="col">Параметр</th>
                    <th scope="col">Значение</th>
                  </tr>
                </thead>
                <tbody>
                  {METRICS.map((metric, i) => (
                    <tr key={metric}>
                      <th scope="row">{i + 1}</th>
                      <td>{metric}</td>
                      <td>{values[i]}</td>
                    </tr>
                  ))}
                </tbody>
              </ResultTable>
            </Viewport>
            <Bar before={0} size={27} after={16} />
          </TableBox>
        </TableDock>
        <SideButtons>
          <PushButton type="button" $tight>Сохранить снимки</PushButton>
          <PushButton type="button" $tight>Сохранить таблицу</PushButton>
          <Status>Ок</Status>
        </SideButtons>
      </Details>
    </Frame>
  );
}

function ParameterValue({ value, name }) {
  if (value === "select") {
    return (
      <Value $control>
        <SelectBox>
          <select aria-label={name} defaultValue="Increase">
            <option>Increase</option>
            <option>Decrease</option>
          </select>
          <Arrow $dir="down" />
        </SelectBox>
      </Value>
    );
  }
  if (value === "check") {
    return (
      <Value $control>
        <CheckBox type="checkbox" aria-label={name} />
      </Value>
    );
  }
  return <Value $empty={value === "-"}>{value}</Value>;
}

/* ---------- translucent screen border ---------- */

const ScreenBorder = styled.div`
  position: fixed;
  inset: 0;
  border: 12px solid rgba(0, 0, 255, 0.5);
  outline: 1px solid #8080ff;
  outline-offset: -1px;
  pointer-events: none;
`;

const ScreenTag = styled.div`
  position: fixed;
  right: 14px;
  bottom: 0;
  width: 79px;
  height: 12px;
  background: #a8a8c8;
  color: #26264a;
  font-family: "Liberation Sans", sans-serif;
  font-size: 12px;
  line-height: 13px;
  font-weight: 700;
  text-align: center;
  overflow: hidden;
`;

export default function App() {
  return (
    <>
      <GlobalStyle />
      <Page>
        <Header>
          <HeaderLeft>
            <CornerButton type="button" aria-label="Меню" />
            <MenuButton type="button">Инструменты</MenuButton>
          </HeaderLeft>
          <TopRow>
            <AppTitle>ClustSystem</AppTitle>
            <HeaderTools>
              <Toggle>
                <input type="checkbox" role="switch" defaultChecked aria-label="Тема" />
              </Toggle>
              <PushButton type="button" $min={80}>-</PushButton>
              <PushButton type="button" $min={80}>+</PushButton>
              <PushButton type="button" $min={80} aria-label="Настройки">
                <Icon width="12" height="12" viewBox="0 0 12 12" fill="none" stroke="#222" style={{ margin: "0 auto" }}>
                  <circle cx="6" cy="6" r="3.300" />
                  <path d="M6 .5v2M6 9.500v2M.5 6h2M9.500 6h2M2 2l1.500 1.500M8.500 8.500L10 10M10 2L8.500 3.500M3.500 8.500L2 10" />
                </Icon>
              </PushButton>
            </HeaderTools>
          </TopRow>
        </Header>

        <Main>
          <SidePanel>
            <Group $grow>
              <GroupHead>
                <h2>Генерация данных</h2>
                <FloatButton />
              </GroupHead>
              <GroupBody $column>
                <ScrollRow>
                  <ChartStack>
                    <SourceCanvas $height={46}><SourceFlatChart /></SourceCanvas>
                    <SourceCanvas $height={232}><SourceDepthChart /></SourceCanvas>
                  </ChartStack>
                  <Bar before={200} size={101} after={0} />
                </ScrollRow>
                <BottomBar>
                  <Bar horizontal before={0} size={295} after={19} />
                </BottomBar>
              </GroupBody>
            </Group>

            <Group>
              <GroupHead>
                <h2>Загрузка данных</h2>
                <FloatButton />
              </GroupHead>
              <GroupBody>
                <Radios>
                  <RadioLabel>
                    <input type="radio" name="source" defaultChecked />
                    1. Сгенерировать и кластеризовать данные
                  </RadioLabel>
                  <RadioLabel>
                    <input type="radio" name="source" />
                    2. Загрузить данные
                  </RadioLabel>
                </Radios>
              </GroupBody>
            </Group>

            <Group $grow $last>
              <GroupHead>
                <h2>Кластеризация данных</h2>
                <FloatButton />
              </GroupHead>
              <GroupBody>
                <Viewport>
                  <ParamFrame>
                    <ParamTable>
                      <colgroup>
                        <col style={{ width: 135 }} />
                        <col style={{ width: 5 }} />
                        <col style={{ width: 87 }} />
                        <col style={{ width: 35 }} />
                        <col />
                      </colgroup>
                      <tbody>
                        {PARAMETERS.map(([name, ...values], i) => (
                          <ParamRow key={name} $tall={i < 6} $current={i === 8}>
                            <th scope="row">{name}</th>
                            <td />
                            {values.map((value, j) => (
                              <ParameterValue key={j} value={value} name={name} />
                            ))}
                          </ParamRow>
                        ))}
                      </tbody>
                    </ParamTable>
                    <Bar horizontal before={67} size={204} after={0} />
                  </ParamFrame>
                </Viewport>
                <Bar before={50} size={267} after={0} />
              </GroupBody>
            </Group>

            <Actions>
              <PushButton type="button">Провести кластеризацию</PushButton>
              <PushButton type="button">Перестроить подокна</PushButton>
            </Actions>
          </SidePanel>

          <Desktop>
            {WINDOWS.map((w) => (
              <SubWindow key={w.name} {...w} />
            ))}
          </Desktop>
        </Main>
      </Page>
      <ScreenBorder />
      <ScreenTag>Multiplicity</ScreenTag>
    </>
  );
}
